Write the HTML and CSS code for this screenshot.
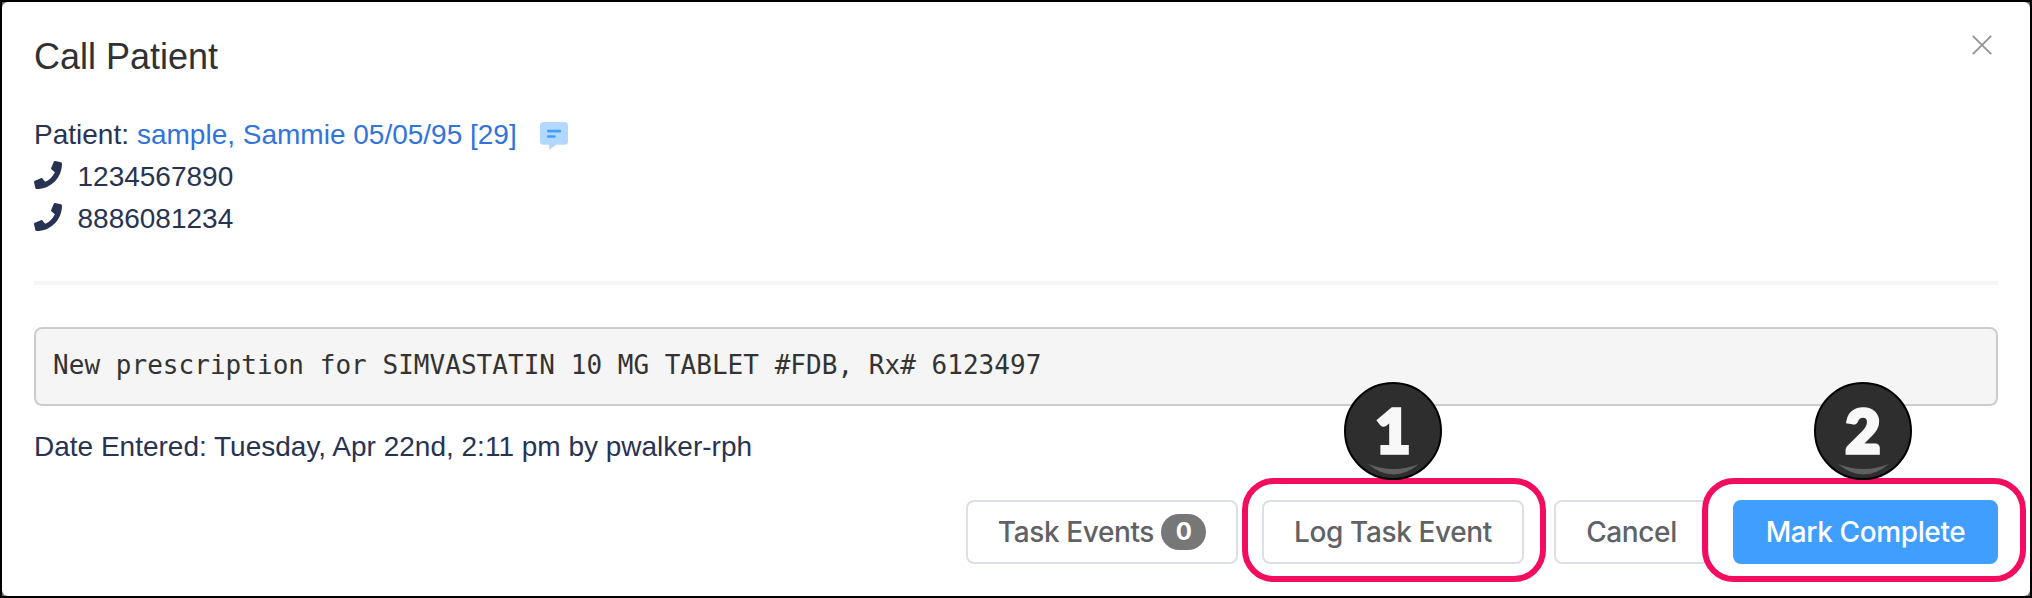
FILE: index.html
```
<!DOCTYPE html>
<html lang="en">
<head>
<meta charset="utf-8">
<title>Call Patient</title>
<link rel="stylesheet" href="styles.css">
</head>
<body>
<svg class="defs" width="0" height="0" aria-hidden="true">
  <symbol id="phone" viewBox="0 0 512 512"><path d="M493.4 24.6l-104-24c-11.300-2.600-22.900 3.300-27.500 13.900l-48 112c-4.200 9.800-1.400 21.300 6.900 28l60.600 49.600c-36 76.700-98.900 140.500-177.200 177.200l-49.600-60.600c-6.800-8.300-18.200-11.100-28-6.900l-112 48C3.900 366.500-2 378.100.6 389.400l24 104C27.100 504.200 36.700 512 48 512c256.100 0 464-207.500 464-464 0-11.200-7.700-20.900-18.600-23.400z"/></symbol>
</svg>
<div class="dialog">
  <header class="header">
    <h1 class="title">Call Patient</h1>
    <button class="close" aria-label="Close"><svg width="20" height="20" viewBox="0 0 20 20"><path d="M.8.8l18.400 18.400M19.200.8L.8 19.200"/></svg></button>
  </header>
  <section class="details">
    <div class="row"><span class="label">Patient:</span><a class="patient">sample, Sammie 05/05/95 [29]</a>
      <svg class="note" width="28" height="28" viewBox="0 0 28 28"><path fill="#b3d8ff" d="M3.500 0h21A3.500 3.500 0 0 1 28 3.500v15.700a3.500 3.500 0 0 1-3.500 3.500h-8.300L9.200 28v-5.300H3.500A3.500 3.500 0 0 1 0 19.200V3.500A3.500 3.500 0 0 1 3.500 0z"/><path d="M8.300 9.200h11.500M8.300 14.500h6.200" stroke="#409eff" stroke-width="2.700" stroke-linecap="round"/></svg>
    </div>
    <div class="row phone"><svg class="phone-icon"><use href="#phone"/></svg><span>1234567890</span></div>
    <div class="row phone"><svg class="phone-icon"><use href="#phone"/></svg><span>8886081234</span></div>
  </section>
  <hr class="divider">
  <pre class="message">New prescription for SIMVASTATIN 10 MG TABLET #FDB, Rx# 6123497</pre>
  <p class="entered">Date Entered: Tuesday, Apr 22nd, 2:11 pm by pwalker-rph</p>
  <footer class="actions">
    <button class="btn events">Task Events <span class="badge">0</span></button>
    <button class="btn log">Log Task Event</button>
    <button class="btn cancel">Cancel</button>
    <button class="btn primary">Mark Complete</button>
  </footer>
  <div class="outline outline-log"></div>
  <div class="outline outline-complete"></div>
  <div class="step step-one"><span>1</span><svg width="51" height="12" viewBox="0 0 51 12"><path d="M0 0Q25.500 10 51 0Q25.500 21 0 0z"/></svg></div>
  <div class="step step-two"><span>2</span><svg width="51" height="12" viewBox="0 0 51 12"><path d="M0 0Q25.500 10 51 0Q25.500 21 0 0z"/></svg></div>
</div>
</body>
</html>
```
FILE: styles.css
```
* { box-sizing: border-box; }
html { height: 598px; overflow: hidden; }
body { margin: 0; height: 598px; overflow: hidden; background: #666; font-family: "Liberation Sans", Arial, sans-serif; }
.defs { position: absolute; }
.dialog {
  position: relative;
  width: 2032px;
  height: 598px;
  padding: 34px 32px 0;
  border: 2px solid #000;
  background: #fff;
  overflow: hidden;
  color: #283353;
  font-size: 28px;
  line-height: 42px;
}
.dialog::before {
  content: "";
  position: absolute;
  inset: 0;
  border-radius: 6px;
  box-shadow: 0 0 0 8px #666;
}
.header { display: flex; justify-content: space-between; align-items: flex-start; height: 78px; }
.title { margin: 0; font-size: 36px; font-weight: 400; color: #303133; }
.close { display: flex; margin: -1px 6px 0 0; padding: 0; border: 0; background: none; }
.close path { stroke: #909399; stroke-width: 1.8; fill: none; }
.row { display: flex; align-items: center; height: 42px; white-space: pre; }
.label { margin-right: 8px; }
.patient { color: #3273dc; }
.note { margin-left: 23px; margin-top: 1px; }
.phone-icon { width: 28px; height: 28px; margin-right: 15.5px; margin-top: -4px; fill: #283353; }
.phone span { margin-top: -1px; }
.divider { height: 4px; margin: 41px 0 42px; border: 0; background: #f5f5f5; }
.message {
  height: 79px;
  margin: 0;
  padding: 15px 17px;
  border: 2px solid #ccc;
  border-radius: 8px;
  background: #f5f5f5;
  color: #333;
  font: 26px/42px "DejaVu Sans Mono", monospace;
  letter-spacing: 0.035px;
}
.entered { margin: 20px 0 32px; }
.actions { display: flex; justify-content: flex-end; }
.btn {
  display: flex;
  align-items: center;
  justify-content: center;
  height: 64px;
  padding: 0;
  border: 2px solid #dcdfe6;
  border-radius: 8px;
  background: #fff;
  color: #606266;
  font: 500 28px/36px Inter, sans-serif;
  letter-spacing: -0.38px;
  white-space: pre;
}
.events { width: 272px; margin-right: 24px; }
.log { width: 262px; margin-right: 30px; }
.cancel { width: 155px; margin-right: 24px; }
.primary { width: 265px; border-color: #409eff; background: #409eff; color: #fff; }
.badge {
  display: flex;
  align-items: center;
  justify-content: center;
  width: 45px;
  height: 36px;
  border-radius: 18px;
  background: #777;
  color: #fff;
  font-size: 24px;
  font-weight: 700;
}
.outline { position: absolute; top: 476px; height: 104px; border: 6px solid #f20d60; border-radius: 32px; }
.outline-log { left: 1240px; width: 304px; }
.outline-complete { left: 1700px; width: 324px; }
.step {
  position: absolute;
  top: 380px;
  width: 98px;
  height: 98px;
  border: 2px solid #000;
  border-radius: 50%;
  background: #2e2e2e;
  color: #f8f8f8;
  font: 900 61px/92px Lato, sans-serif;
  -webkit-text-stroke: 3.5px #f8f8f8;
  text-align: center;
}
.step svg { position: absolute; left: 21.5px; top: 80px; fill: #606060; }
.step-one { left: 1342px; }
.step-two { left: 1812px; }
```
